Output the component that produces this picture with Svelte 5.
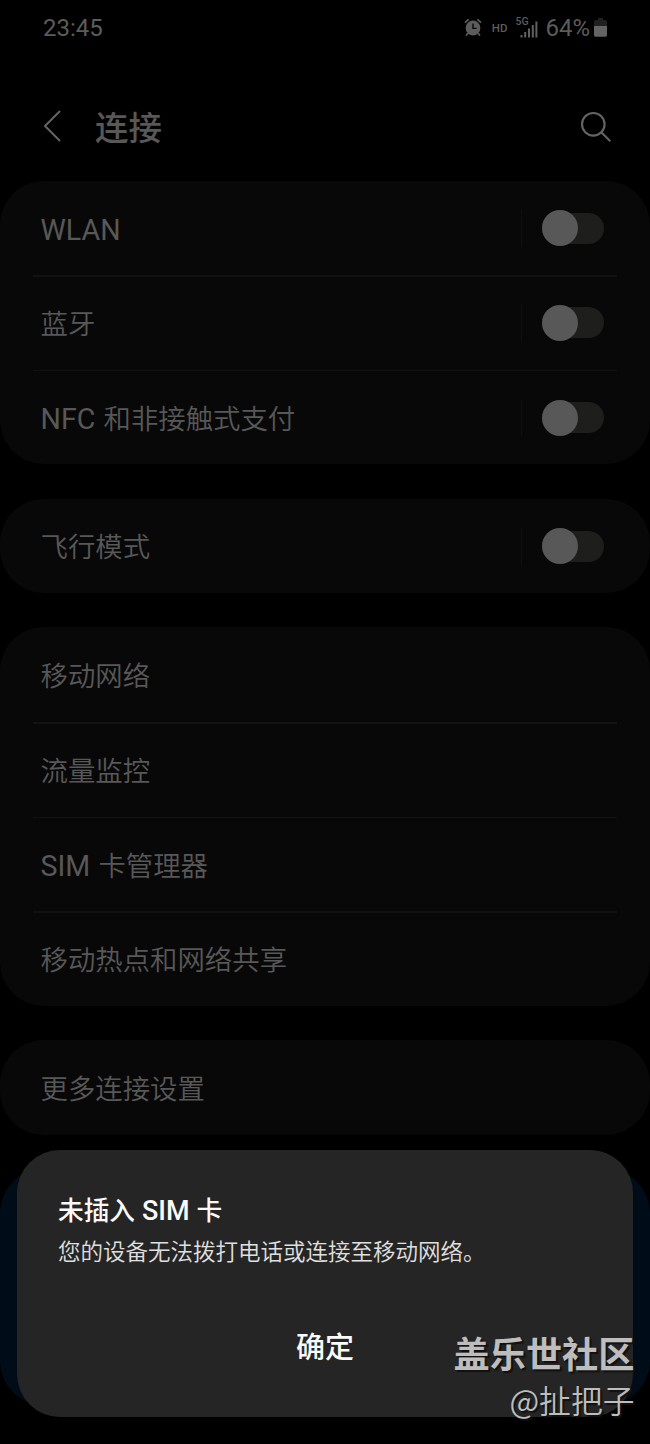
<script>
  const groups = [
    [
      { latin: 'WLAN', text: '', toggle: true },
      { latin: '', text: '蓝牙', toggle: true },
      { latin: 'NFC', text: ' 和非接触式支付', toggle: true }
    ],
    [{ latin: '', text: '飞行模式', toggle: true }],
    [
      { latin: '', text: '移动网络' },
      { latin: '', text: '流量监控' },
      { latin: 'SIM', text: ' 卡管理器' },
      { latin: '', text: '移动热点和网络共享' }
    ],
    [{ latin: '', text: '更多连接设置' }]
  ];
</script>

<div class="screen">
  <div class="status">
    <span class="time">23:45</span>
    <div class="indicators">
      <svg class="alarm" width="18" height="19" viewBox="0 0 18 19">
        <circle cx="9" cy="10" r="7.4" fill="#5c5c5c" />
        <path d="M1 4.6 4.6 1.3M17 4.6 13.4 1.3M3.9 15.2 2 17.6M14.1 15.2 16 17.6" stroke="#5c5c5c" stroke-width="1.7" fill="none" />
        <path d="M9 5.6V10.4H12.6" stroke="#000" stroke-width="1.3" fill="none" />
      </svg>
      <span class="hd">HD</span>
      <div class="signal">
        <span class="gen">5G</span>
        <svg width="18" height="17" viewBox="0 0 18 17" fill="#606060">
          <rect x="0.5" y="14" width="2" height="2.5" />
          <rect x="4.2" y="11" width="2" height="5.5" />
          <rect x="8" y="7.5" width="2" height="9" />
          <rect x="11.8" y="4" width="2" height="12.5" />
          <rect x="15.4" y="0.5" width="2" height="16" />
        </svg>
      </div>
      <span class="percent">64%</span>
      <svg class="battery" width="13" height="19" viewBox="0 0 13 19">
        <path d="M4 0H9V2H11.5Q13 2 13 3.5V8H0V3.5Q0 2 1.5 2H4Z" fill="#202020" />
        <path d="M0 8H13V17Q13 18.8 11.3 18.8H1.7Q0 18.8 0 17Z" fill="#646464" />
      </svg>
    </div>
  </div>

  <header>
    <svg class="back" width="20" height="34" viewBox="0 0 20 34">
      <path d="M18 2 3 17 18 32" fill="none" stroke="#646464" stroke-width="2" />
    </svg>
    <h1>连接</h1>
    <svg class="search" width="32" height="32" viewBox="0 0 32 32" fill="none" stroke="#646464" stroke-width="2.1">
      <circle cx="13.3" cy="13.3" r="11.3" />
      <path d="M21.2 21.2 30.3 30.3" />
    </svg>
  </header>

  <main>
    {#each groups as rows}
      <section>
        {#each rows as row}
          <div class="row">
            <span class="label">{#if row.latin}<span class="latin">{row.latin}</span>{/if}{row.text}</span>
            {#if row.toggle}
              <div class="control"><div class="track"><div class="thumb"></div></div></div>
            {/if}
          </div>
        {/each}
      </section>
    {/each}
    <section class="tips"></section>
  </main>

  <div class="dialog">
    <h2>未插入 <span class="latin-title">SIM</span> 卡</h2>
    <p>您的设备无法拨打电话或连接至移动网络。</p>
    <button>确定</button>
  </div>

  <div class="watermark">
    <div class="community">盖乐世社区</div>
    <div class="author">@扯把子</div>
  </div>
</div>

<style>
  :global(body) { background: #000; }
  .screen {
    position: relative;
    width: 650px;
    height: 1444px;
    overflow: hidden;
    background: #000;
    color: #585858;
    font-family: Roboto, "Noto Sans CJK SC", sans-serif;
    box-sizing: border-box;
  }
  .status {
    height: 56px;
    display: flex;
    justify-content: space-between;
    padding: 0 43px;
    color: #5c5c5c;
  }
  .time { font-size: 24px; line-height: 56px; }
  .indicators { display: flex; align-items: flex-start; }
  .alarm { margin-top: 18px; }
  .hd { font-size: 11.5px; line-height: 14px; margin: 21px 0 0 10px; font-weight: 500; }
  .signal { position: relative; width: 23px; height: 40px; margin-left: 8px; }
  .signal svg { position: absolute; left: 5px; top: 21px; }
  .gen { position: absolute; left: 0; top: 16px; font-size: 10.5px; line-height: 12px; font-weight: 500; z-index: 1; }
  .percent { font-size: 24px; line-height: 56px; margin-left: 7px; }
  .battery { margin: 18px 0 0 4px; }
  header {
    height: 124.5px;
    display: flex;
    align-items: flex-start;
    padding: 0 38px 0 42px;
  }
  .back { margin-top: 53px; }
  h1 {
    flex: 1;
    margin: 49px 0 0 33px;
    font-size: 33.5px;
    line-height: 48px;
    font-weight: 500;
    color: #585858;
  }
  .search { margin-top: 54.5px; }
  main { display: flex; flex-direction: column; gap: 34.2px; }
  section { background: #080808; border-radius: 44px; }
  .row {
    position: relative;
    height: 94.65px;
    box-sizing: border-box;
    display: flex;
    align-items: center;
    justify-content: space-between;
    padding: 0 46px 0 40.5px;
  }
  .row + .row::before {
    content: "";
    position: absolute;
    left: 33px;
    right: 33px;
    top: 0;
    height: 1.5px;
    background: #121212;
  }
  .label {
    font-size: 27.4px;
    line-height: 40px;
    white-space: pre;
    margin-top: 5px;
    font-family: Roboto, "Noto Sans CJK SC DemiLight", "Noto Sans CJK SC", sans-serif;
    font-weight: 350;
    word-spacing: 1.5px;
  }
  .latin { font-size: 28.6px; font-weight: 400; }
  .control {
    height: 37px;
    border-left: 1.5px solid #0f0f0f;
    padding-left: 20.5px;
    display: flex;
    align-items: center;
    margin-top: 1px;
  }
  .track { width: 62px; height: 31px; border-radius: 16px; background: #1e1e1c; display: flex; align-items: center; }
  .thumb { width: 36px; height: 36px; flex: none; border-radius: 50%; background: #585858; }
  .tips { height: 236px; background: #000d19; }
  .dialog {
    position: absolute;
    left: 17px;
    top: 1150px;
    width: 616px;
    height: 266.5px;
    box-sizing: border-box;
    padding: 42px 41px 0;
    border-radius: 43px;
    background: #252525;
    color: #fafafa;
    display: flex;
    flex-direction: column;
  }
  h2 { margin: 0; font-size: 25.7px; line-height: 38px; font-weight: 500; word-spacing: 0.5px; }
  .latin-title { font-size: 27px; }
  p {
    margin: 4px 0 0;
    font-size: 22.5px;
    line-height: 32px;
    color: #e0e0e0;
    font-family: "Noto Sans CJK SC DemiLight", "Noto Sans CJK SC", sans-serif;
    font-weight: 350;
    white-space: nowrap;
  }
  button {
    align-self: center;
    margin-top: 60px;
    padding: 0;
    border: 0;
    background: none;
    color: #fafafa;
    font: 500 29px/44px Roboto, "Noto Sans CJK SC", sans-serif;
  }
  .watermark {
    position: absolute;
    right: 15.5px;
    top: 1330px;
    text-align: right;
    color: #bdbdbd;
    text-shadow: 2px 2px 1px #111;
  }
  .community { font-size: 36.2px; line-height: 52px; font-weight: 700; }
  .author {
    margin-top: -5px;
    font-size: 31.8px;
    line-height: 44px;
    font-family: "Noto Sans CJK SC DemiLight", "Noto Sans CJK SC", sans-serif;
    font-weight: 350;
  }
</style>
